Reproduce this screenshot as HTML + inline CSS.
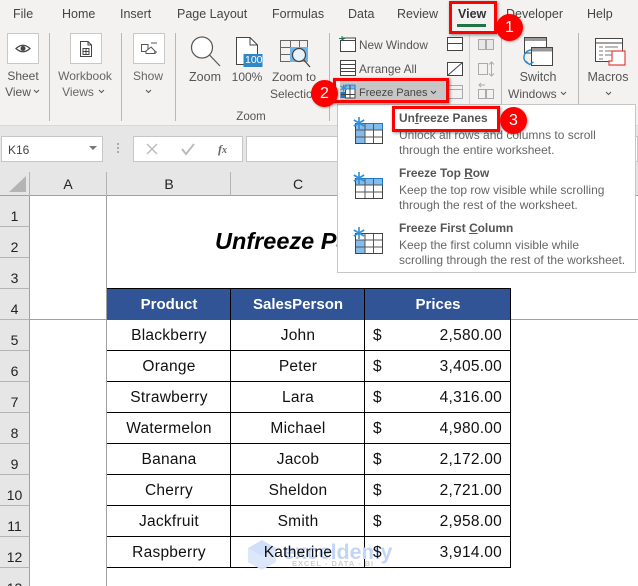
<!DOCTYPE html>
<html><head><meta charset="utf-8"><style>
html,body{margin:0;padding:0;width:638px;height:586px;overflow:hidden;background:#fff}
body{font-family:"Liberation Sans",sans-serif}
#p{position:absolute;left:0;top:0;width:638px;height:586px;overflow:hidden;background:#fff}
#p div{position:absolute;box-sizing:border-box}
.t{position:absolute;white-space:nowrap;font-size:12.5px;color:#444;line-height:16px}
.c{transform:translateX(-50%)}
.r{transform:translateX(-100%)}
.tab{font-size:12.5px;color:#444;top:6px}
#p .sep{width:1px;background:#b8b8b8}
#p .wb{background:#fff;border:1px solid #c8c8c8}
#p .rh{left:0;width:30px;background:#e6e6e6;border-right:1px solid #a0a0a0;border-bottom:1px solid #b4b4b4;color:#222;font-size:14px;text-align:center;line-height:16px;padding-top:12px}
.cell{font-size:15.5px;letter-spacing:.25px;color:#111;line-height:18px;position:absolute;white-space:nowrap}
#p .red{border:3px solid #f00;box-shadow:1px 1px 3px rgba(0,0,0,.45)}
#p .badge{width:27px;height:27px;border-radius:50%;background:#f00;color:#fff;text-align:center;font-size:16px;line-height:27px;box-shadow:1px 1px 2px rgba(0,0,0,.3)}
.h{color:#fff;font-weight:bold;font-size:15px;line-height:18px;position:absolute;white-space:nowrap}
svg{position:absolute;overflow:visible}
.m1{font-weight:bold;font-size:11.9px;color:#555;left:399px;line-height:14px;position:absolute;white-space:nowrap}
.m2{font-size:12px;color:#666;left:399px;line-height:14px;position:absolute;white-space:nowrap}
</style></head><body><div id="p">
<!-- ribbon -->
<div style="left:0;top:0;width:638px;height:125px;background:#f3f2f1"></div>
<div style="left:0;top:125px;width:638px;height:47px;background:#e6e6e6;border-top:1px solid #d8d8d8"></div>
<span class="t tab" style="left:13px">File</span>
<span class="t tab" style="left:62px">Home</span>
<span class="t tab" style="left:120px">Insert</span>
<span class="t tab" style="left:177px">Page Layout</span>
<span class="t tab" style="left:272px">Formulas</span>
<span class="t tab" style="left:348px">Data</span>
<span class="t tab" style="left:397px">Review</span>
<span class="t tab" style="left:458px;font-weight:bold;color:#333">View</span>
<span class="t tab" style="left:506px">Developer</span>
<span class="t tab" style="left:587px">Help</span>
<div style="left:457px;top:24px;width:29px;height:3px;background:#217346"></div>

<div class="wb" style="left:7px;top:33px;width:32px;height:31px"></div>
<svg style="left:7px;top:33px" width="32" height="31"><path d="M9 15.500Q16 9 23 15.500Q16 22 9 15.500Z" fill="none" stroke="#444" stroke-width="1.200"/><circle cx="16" cy="15.500" r="2.500" fill="#444"/></svg>
<span class="t c" style="left:23px;top:68px;font-size:12px;color:#555">Sheet</span>
<span class="t c" style="left:18px;top:84px;font-size:12px;color:#555">View</span>
<svg style="left:33px;top:89px" width="7" height="5"><path d="M1 1L3.500 3.500L6 1" fill="none" stroke="#555"/></svg>
<div class="sep" style="left:49px;top:33px;height:88px"></div>

<div class="wb" style="left:70px;top:33px;width:32px;height:31px"></div>
<svg style="left:70px;top:33px" width="32" height="31"><path d="M10.500 8.500H18L21.500 12V23.500H10.500Z M18 8.500V12H21.500" fill="none" stroke="#444"/><path d="M13 15.500H19V21.500H13Z M16 15.500V21.500 M13 18.500H19" fill="none" stroke="#444"/></svg>
<span class="t c" style="left:85px;top:68px;font-size:12px;color:#666">Workbook</span>
<span class="t c" style="left:78px;top:84px;font-size:12px;color:#666">Views</span>
<svg style="left:98px;top:89px" width="7" height="5"><path d="M1 1L3.500 3.500L6 1" fill="none" stroke="#555"/></svg>
<div class="sep" style="left:121px;top:33px;height:88px"></div>

<div class="wb" style="left:133px;top:33px;width:32px;height:31px"></div>
<svg style="left:133px;top:33px" width="32" height="31"><path d="M8.500 11.500H15V18.500H8.500Z" fill="none" stroke="#555"/><path d="M13 18L18 14L22 18V20.500H13Z" fill="#fff" stroke="#555"/><path d="M18 10H24M21 19H24" stroke="#555"/></svg>
<span class="t c" style="left:148px;top:68px;font-size:12px;color:#666">Show</span>
<svg style="left:145px;top:89px" width="7" height="5"><path d="M1 1L3.500 3.500L6 1" fill="none" stroke="#555"/></svg>
<div class="sep" style="left:175px;top:33px;height:88px"></div>

<svg style="left:189px;top:36px" width="34" height="32"><circle cx="13" cy="11.500" r="10.500" fill="#fff" stroke="#555" stroke-width="1.200"/><path d="M20.500 19L31 30" stroke="#555" stroke-width="1.200"/></svg>
<span class="t c" style="left:205px;top:69px;font-size:12.500px;color:#555">Zoom</span>
<svg style="left:235px;top:36px" width="30" height="32"><path d="M1.500 1.500H15L22.500 9V28.500H1.500Z" fill="#fff" stroke="#444"/><path d="M15 1.500V9H22.500" fill="none" stroke="#444"/><rect x="8.500" y="18" width="19" height="13" fill="#2f87c8"/></svg>
<span class="t" style="left:245px;top:54px;font-size:10.500px;color:#fff;line-height:13px">100</span>
<span class="t c" style="left:247px;top:69px;font-size:12px;color:#555">100%</span>
<svg style="left:279px;top:39px" width="34" height="30"><path d="M1.500 1.500H28.500V22.500H1.500Z M11.500 1.500V22.500 M20.500 1.500V22.500 M1.500 8.500H28.500 M1.500 15.500H28.500" fill="none" stroke="#666"/><rect x="11" y="8" width="18" height="15" fill="#70b3e4"/><circle cx="20" cy="16" r="6.500" fill="#e8f2fa" stroke="#444" stroke-width="1.200"/><path d="M24.500 20.500L31 28" stroke="#444" stroke-width="1.300"/></svg>
<span class="t c" style="left:294px;top:69px;font-size:12px;color:#555">Zoom to</span>
<span class="t" style="left:270px;top:86px;font-size:12px;color:#555">Selection</span>
<span class="t c" style="left:251px;top:109px;font-size:11.500px;color:#555">Zoom</span>
<div class="sep" style="left:329px;top:33px;height:88px"></div>

<!-- window group -->
<svg style="left:339px;top:35px" width="20" height="18"><path d="M1.500 5.500H16.500V16.500H1.500Z M4 5.500V3H16.500V5.500" fill="#fff" stroke="#444"/><path d="M0 3.500H6M3 1V6" stroke="#217346"/></svg>
<span class="t" style="left:359px;top:37px;font-size:11.800px;color:#555">New Window</span>
<svg style="left:339px;top:59px" width="20" height="18"><path d="M1.500 1.500H16.500V16.500H1.500Z M1.500 5.500H16.500 M1.500 9.500H16.500 M1.500 12.500H16.500" fill="#fff" stroke="#444"/></svg>
<span class="t" style="left:359px;top:61px;font-size:11.800px;color:#555">Arrange All</span>
<div style="left:340px;top:81px;width:106px;height:21px;background:#c6c6c6"></div>
<svg style="left:340px;top:84px" width="16" height="15"><rect x="5.500" y="1.500" width="9.500" height="12.500" fill="#fff" stroke="#444"/><rect x="5" y="1" width="10" height="4" fill="#7db8ea" stroke="#1f78c4" stroke-width=".8"/><rect x="0.500" y="8" width="5" height="6" fill="#1f78c4"/><path d="M10 1V14M1 10.500H15" stroke="#444"/><path d="M3.500 0.500V7.500M0.500 2L6.500 6M6.500 2L0.500 6" stroke="#2f8fd6" stroke-width="1.100"/></svg>
<span class="t" style="left:359px;top:85px;font-size:11px;color:#444">Freeze Panes</span>
<svg style="left:430px;top:90px" width="7" height="5"><path d="M1 1L3.500 3.500L6 1" fill="none" stroke="#444"/></svg>
<svg style="left:447px;top:35px" width="18" height="68"><path d="M0.500 2.500H15.500V15.500H0.500Z M0.500 8.500H15.500" fill="#fff" stroke="#444"/><path d="M0.500 27.500H15.500V40.500H0.500Z M0.500 40.500L15.500 27.500" fill="#fff" stroke="#444"/><path d="M1.500 50.500H15.500V63.500H1.500Z M1.500 54.500H15.500" fill="none" stroke="#aaa"/></svg>
<div style="left:469px;top:35px;width:1px;height:86px;background:#d0d0d0"></div>
<svg style="left:476px;top:36px" width="20" height="66"><path d="M2.500 3.500H9.500V13.500H2.500Z M10.500 3.500H17.500V13.500H10.500Z" fill="#e8e8e8" stroke="#aaa"/><path d="M2.500 27.500H11.500V38.500H2.500Z M15.500 26V40 M13 28.500L15.500 26L18 28.500 M13 37.500L15.500 40L18 37.500" fill="none" stroke="#aaa"/><path d="M2.500 53.500H9.500V62.500H2.500Z M10.500 53.500H17.500V62.500H10.500Z M3 49H9M5 47L3 49L5 51" fill="none" stroke="#aaa"/></svg>
<div class="sep" style="left:501px;top:33px;height:88px"></div>

<svg style="left:522px;top:37px" width="34" height="32"><path d="M2.500 0.500H24.500V16H2.500Z" fill="#fff" stroke="#444"/><rect x="3" y="1" width="21" height="3" fill="#999"/><path d="M9.500 10.500H30.500V28.500H9.500Z" fill="#fff" stroke="#444"/><rect x="10" y="11" width="20" height="3.500" fill="#999"/><path d="M9 13C1 14 -1 24 7 27M3.500 24L7.500 27.500L11.500 25" fill="none" stroke="#2f87c8" stroke-width="1.400"/></svg>
<span class="t c" style="left:538px;top:69px;font-size:12.500px;color:#555">Switch</span>
<span class="t" style="left:508px;top:86px;font-size:12px;color:#555">Windows</span>
<svg style="left:560px;top:91px" width="7" height="5"><path d="M1 1L3.500 3.500L6 1" fill="none" stroke="#555"/></svg>
<div class="sep" style="left:578px;top:33px;height:88px"></div>
<svg style="left:594px;top:37px" width="34" height="32"><path d="M1.500 1.500H28.500V24.500H1.500Z M1.500 6H28.500" fill="#fff" stroke="#444"/><path d="M5 10H9M11 10H24M5 14H9M11 14H20M5 18H9M11 18H18M5 22H9" stroke="#777"/><path d="M18 14H31V28H15V24H18Z" fill="#fff" stroke="#e8413c" stroke-width="1.200"/></svg>
<span class="t c" style="left:608px;top:69px;font-size:12.500px;color:#555">Macros</span>
<svg style="left:605px;top:91px" width="7" height="5"><path d="M1 1L3.500 3.500L6 1" fill="none" stroke="#555"/></svg>

<!-- formula bar -->
<div style="left:1px;top:136px;width:102px;height:26px;background:#fff;border:1px solid #c6c6c6"></div>
<span class="t" style="left:8px;top:142px;font-size:12px;color:#444">K16</span>
<svg style="left:89px;top:146px" width="9" height="5"><path d="M0 0H8L4 4Z" fill="#777"/></svg>
<div style="left:117px;top:143px;width:2px;height:2px;background:#aaa;box-shadow:0 4px 0 #aaa,0 8px 0 #aaa"></div>
<div style="left:133px;top:136px;width:110px;height:26px;background:#fff;border:1px solid #c6c6c6"></div>
<svg style="left:145px;top:142px" width="50" height="14"><path d="M2 2L12 12M12 2L2 12" stroke="#bbb" stroke-width="1.400"/><path d="M37 7L41 12L49 2" stroke="#bbb" stroke-width="2" fill="none"/></svg>
<span class="t" style="left:218px;top:141px;font-size:12px;font-family:'Liberation Serif',serif;font-style:italic;font-weight:bold;color:#666">f<span style="font-size:10px">x</span></span>
<div style="left:246px;top:136px;width:392px;height:26px;background:#fff;border:1px solid #c6c6c6"></div>

<!-- col headers -->
<div style="left:0;top:172px;width:638px;height:24px;background:#e6e6e6;border-bottom:1px solid #a0a0a0"></div>
<svg style="left:9px;top:176px" width="18" height="18"><path d="M17 0V16H0Z" fill="#b4b4b4"/></svg>
<div style="left:29px;top:172px;width:1px;height:24px;background:#b4b4b4"></div>
<div style="left:106px;top:172px;width:1px;height:24px;background:#b4b4b4"></div>
<div style="left:230px;top:172px;width:1px;height:24px;background:#b4b4b4"></div>
<div style="left:364px;top:172px;width:1px;height:24px;background:#b4b4b4"></div>
<span class="t c" style="left:68px;top:176px;font-size:14px;color:#222">A</span>
<span class="t c" style="left:169px;top:176px;font-size:14px;color:#222">B</span>
<span class="t c" style="left:298px;top:176px;font-size:14px;color:#222">C</span>

<!-- row headers -->
<div class="rh" style="top:196px;height:31px">1</div>
<div class="rh" style="top:227px;height:31px">2</div>
<div class="rh" style="top:258px;height:31px">3</div>
<div class="rh" style="top:289px;height:31px">4</div>
<div class="rh" style="top:320px;height:31px">5</div>
<div class="rh" style="top:351px;height:31px">6</div>
<div class="rh" style="top:382px;height:31px">7</div>
<div class="rh" style="top:413px;height:31px">8</div>
<div class="rh" style="top:444px;height:31px">9</div>
<div class="rh" style="top:475px;height:31px">10</div>
<div class="rh" style="top:506px;height:31px">11</div>
<div class="rh" style="top:537px;height:31px">12</div>
<div class="rh" style="top:568px;height:18px;border-bottom:0">13</div>

<!-- grid lines -->
<div style="left:106px;top:196px;width:1px;height:390px;background:#a0a0a0"></div>
<div style="left:30px;top:319px;width:608px;height:1px;background:#a0a0a0"></div>

<span class="t" style="left:215px;top:227px;font-size:23.500px;line-height:28px;font-weight:bold;font-style:italic;color:#000">Unfreeze Panes</span>

<!-- table -->
<div style="left:107px;top:289px;width:404px;height:31px;background:#305496"></div>
<div style="left:107px;top:288px;width:404px;height:1px;background:#000"></div>
<div style="left:107px;top:350px;width:404px;height:1px;background:#000"></div>
<div style="left:107px;top:381px;width:404px;height:1px;background:#000"></div>
<div style="left:107px;top:412px;width:404px;height:1px;background:#000"></div>
<div style="left:107px;top:443px;width:404px;height:1px;background:#000"></div>
<div style="left:107px;top:474px;width:404px;height:1px;background:#000"></div>
<div style="left:107px;top:505px;width:404px;height:1px;background:#000"></div>
<div style="left:107px;top:536px;width:404px;height:1px;background:#000"></div>
<div style="left:107px;top:567px;width:404px;height:1px;background:#000"></div>
<div style="left:230px;top:288px;width:1px;height:280px;background:#000"></div>
<div style="left:364px;top:288px;width:1px;height:280px;background:#000"></div>
<div style="left:510px;top:288px;width:1px;height:280px;background:#000"></div>

<!-- watermark -->
<svg style="left:248px;top:540px" width="30" height="30"><path d="M14 0L28 8V22L14 30L0 22V8Z" fill="#c7d7f6" opacity=".8"/><path d="M0 8L14 16L28 8V22L14 30L0 22Z" fill="#dfe8fa" opacity=".8"/></svg>
<span class="t" style="left:283px;top:540px;font-size:21.400px;line-height:24px;font-weight:bold;color:#c3d5f7">exceldemy</span>
<span class="t" style="left:292px;top:559px;font-size:7.500px;line-height:10px;font-weight:bold;letter-spacing:1px;color:#cfcfcf">EXCEL - DATA - BI</span>

<span class="h c" style="left:169px;top:296px">Product</span>
<span class="h c" style="left:298px;top:296px">SalesPerson</span>
<span class="h c" style="left:438px;top:296px">Prices</span>

<span class="cell c" style="left:169px;top:327px">Blackberry</span><span class="cell c" style="left:298px;top:327px">John</span><span class="cell" style="left:373px;top:327px">$</span><span class="cell r" style="left:502px;top:327px">2,580.00</span>
<span class="cell c" style="left:169px;top:358px">Orange</span><span class="cell c" style="left:298px;top:358px">Peter</span><span class="cell" style="left:373px;top:358px">$</span><span class="cell r" style="left:502px;top:358px">3,405.00</span>
<span class="cell c" style="left:169px;top:389px">Strawberry</span><span class="cell c" style="left:298px;top:389px">Lara</span><span class="cell" style="left:373px;top:389px">$</span><span class="cell r" style="left:502px;top:389px">4,316.00</span>
<span class="cell c" style="left:169px;top:420px">Watermelon</span><span class="cell c" style="left:298px;top:420px">Michael</span><span class="cell" style="left:373px;top:420px">$</span><span class="cell r" style="left:502px;top:420px">4,980.00</span>
<span class="cell c" style="left:169px;top:451px">Banana</span><span class="cell c" style="left:298px;top:451px">Jacob</span><span class="cell" style="left:373px;top:451px">$</span><span class="cell r" style="left:502px;top:451px">2,172.00</span>
<span class="cell c" style="left:169px;top:482px">Cherry</span><span class="cell c" style="left:298px;top:482px">Sheldon</span><span class="cell" style="left:373px;top:482px">$</span><span class="cell r" style="left:502px;top:482px">2,721.00</span>
<span class="cell c" style="left:169px;top:513px">Jackfruit</span><span class="cell c" style="left:298px;top:513px">Smith</span><span class="cell" style="left:373px;top:513px">$</span><span class="cell r" style="left:502px;top:513px">2,958.00</span>
<span class="cell c" style="left:169px;top:544px">Raspberry</span><span class="cell c" style="left:298px;top:544px">Katherine</span><span class="cell" style="left:373px;top:544px">$</span><span class="cell r" style="left:502px;top:544px">3,914.00</span>

<!-- dropdown -->
<div style="left:337px;top:104px;width:299px;height:169px;background:#fff;border:1px solid #c6c6c6"></div>
<svg style="left:352px;top:116px" width="32" height="30"><rect x="3.500" y="7.500" width="27" height="20" fill="#fff" stroke="#444"/><rect x="4" y="8" width="26" height="6" fill="#83bceb"/><rect x="4" y="14" width="9" height="13" fill="#83bceb"/><path d="M13 8V27M21.500 8V27M4 14H30M4 21H30" stroke="#555"/><path d="M3.500 7.500H30.500V14" stroke="#1f78c4" fill="none"/><path d="M7 1V13M1.800 4L12.200 10M12.200 4L1.800 10" stroke="#2f8fd6" stroke-width="1.600"/></svg>
<svg style="left:352px;top:171px" width="32" height="30"><rect x="3.500" y="7.500" width="27" height="20" fill="#fff" stroke="#444"/><rect x="4" y="8" width="26" height="6" fill="#83bceb"/><path d="M13 8V27M21.500 8V27M4 14H30M4 21H30" stroke="#555"/><path d="M3.500 7.500H30.500V14" stroke="#1f78c4" fill="none"/><path d="M7 1V13M1.800 4L12.200 10M12.200 4L1.800 10" stroke="#2f8fd6" stroke-width="1.600"/></svg>
<svg style="left:352px;top:226px" width="32" height="30"><rect x="3.500" y="7.500" width="27" height="20" fill="#fff" stroke="#444"/><rect x="4" y="14" width="9" height="13" fill="#83bceb"/><path d="M13 8V27M21.500 8V27M4 14H30M4 21H30" stroke="#555"/><path d="M7 1V13M1.800 4L12.200 10M12.200 4L1.800 10" stroke="#2f8fd6" stroke-width="1.600"/></svg>

<span class="m1" style="top:111px">Un<u>f</u>reeze Panes</span>
<span class="m2" style="top:128px">Unlock all rows and columns to scroll</span>
<span class="m2" style="top:143px">through the entire worksheet.</span>
<span class="m1" style="top:166px">Freeze Top <u>R</u>ow</span>
<span class="m2" style="top:183px">Keep the top row visible while scrolling</span>
<span class="m2" style="top:198px">through the rest of the worksheet.</span>
<span class="m1" style="top:221px">Freeze First <u>C</u>olumn</span>
<span class="m2" style="top:238px">Keep the first column visible while</span>
<span class="m2" style="top:253px">scrolling through the rest of the worksheet.</span>

<!-- annotations -->
<div class="red" style="left:449px;top:1px;width:48px;height:33px"></div>
<div class="red" style="left:333px;top:78px;width:116px;height:25px"></div>
<div class="red" style="left:392px;top:106px;width:108px;height:26px"></div>
<div class="badge" style="left:496px;top:14px">1</div>
<div class="badge" style="left:311px;top:80px">2</div>
<div class="badge" style="left:500px;top:107px">3</div>
</div></body></html>
